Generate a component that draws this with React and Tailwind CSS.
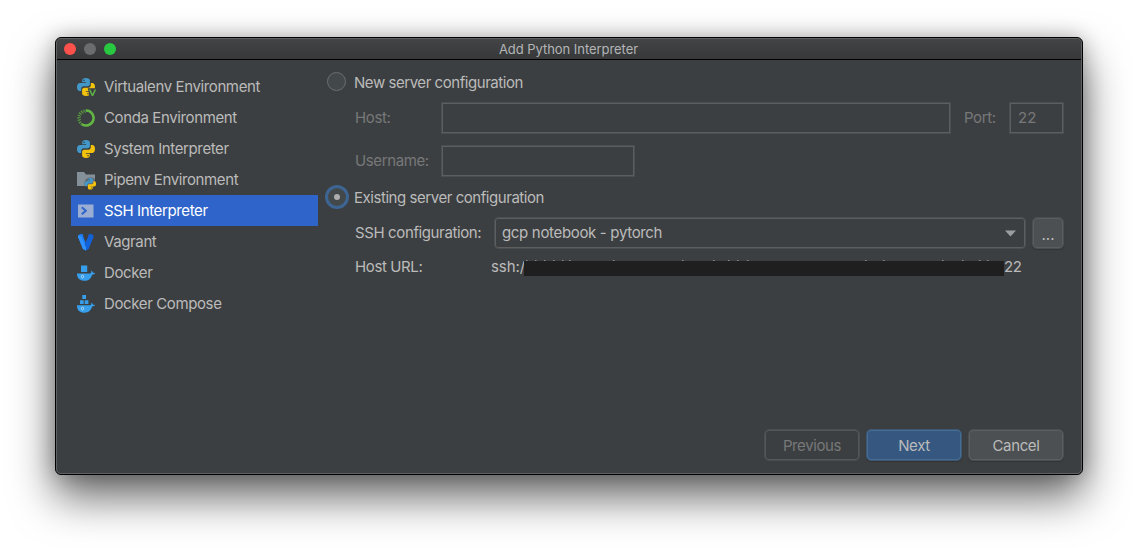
import React from "react";

function PythonShapes() {
  return (
    <>
      <path fill="#4298C8" d="M8.9 0C6 0 5.2 1.1 5.2 2.4v1.9h4v.6H3C1.2 4.900 0 6.300 0 9c0 2.600 1.100 4 2.700 4h1.500v-2.200c0-1.500 1.200-2.600 2.600-2.600h4c1.200 0 2.100-1 2.100-2.200V2.400C12.900.9 11.500 0 8.900 0z" />
      <circle cx="7" cy="2.300" r="0.800" fill="#2f3a40" />
      <path fill="#F2C20C" d="M9.100 18c2.900 0 3.700-1.100 3.700-2.400v-1.900h-4v-.6H15c1.800 0 3-1.400 3-4.100 0-2.600-1.100-4-2.700-4h-1.500v2.200c0 1.500-1.200 2.600-2.600 2.600h-4c-1.200 0-2.100 1-2.100 2.200v3.600c0 1.500 1.400 2.400 4 2.400z" />
      <circle cx="11" cy="15.700" r="0.800" fill="#4b4528" />
    </>
  );
}

function VirtualenvIcon() {
  return (
    <svg width="20" height="18" viewBox="0 0 20 18">
      <PythonShapes />
      <path d="M10.800 10.300h9.200v7.700h-7.500z" fill="#3c3f41" />
      <path d="M12.600 11.500l2.900 6.300 2.900-6.300" fill="none" stroke="#5FB246" strokeWidth="1.500" />
    </svg>
  );
}

function CondaIcon() {
  return (
    <svg width="20" height="18" viewBox="0 0 20 18" fill="none" stroke="#62B543">
      <path d="M9 1.500A7.500 7.500 0 1 1 5 15.300" strokeWidth="2.600" />
      <path d="M5 15.300A7.500 7.500 0 0 1 9 1.500" strokeWidth="2.600" strokeDasharray="1.300 1" opacity="0.750" />
      <path d="M9 3.300A5.800 5.800 0 0 0 4 12" strokeWidth="0.900" strokeDasharray="1 1.400" />
    </svg>
  );
}

function PythonIcon() {
  return (
    <svg width="20" height="18" viewBox="0 0 20 18">
      <PythonShapes />
    </svg>
  );
}

function PipenvIcon() {
  return (
    <svg width="20" height="18" viewBox="0 0 20 18" overflow="visible">
      <path d="M0 1h7l2 2.500h9V15H0z" fill="#84919A" />
      <circle cx="13.500" cy="12.500" r="6.200" fill="#3c3f41" opacity="0.450" />
      <g transform="translate(7.600 7) scale(0.640)">
        <PythonShapes />
      </g>
    </svg>
  );
}

function SshIcon() {
  return (
    <svg width="20" height="18" viewBox="0 0 20 18">
      <path d="M1 2.500h15.500v13H1z" fill="#9AAED3" />
      <path d="M4.800 5.300l4 3.500-4 3.500" fill="none" stroke="#2F65CA" strokeWidth="2" />
    </svg>
  );
}

function VagrantIcon() {
  return (
    <svg width="20" height="18" viewBox="0 0 20 18">
      <path d="M1 2.200L4.400.8 6.200 1.700v1.900L9 10.500v6.900l-3-1.500L1 4z" fill="#1B7CF5" />
      <path d="M16.500 2.200L13.200.8 11.300 1.700v1.900L7.500 12v4.700l1.500.7 2.700-1.500L16.500 4z" fill="#1261D6" />
      <path d="M1 2.200l3.400 1.300L9 14.500v2.900l-3-1.500L1 4z" fill="#2E91FF" />
    </svg>
  );
}

function WhaleShapes() {
  return (
    <>
      <path d="M0 8.800h13.400c.8-.4.900-1.400.7-2.600.9.300 1.700 1.100 1.900 2 .8-.1 1.500 0 2 .4-.5 1-1.500 1.400-2.800 1.500-1.100 3.700-3.500 6.100-7.800 6.100C2.700 16.200-.2 13.500 0 8.800z" fill="#369EEA" />
      <ellipse cx="5.500" cy="12" rx="1.100" ry="1.500" fill="none" stroke="#B9DDF5" strokeWidth="0.900" />
    </>
  );
}

function DockerIcon() {
  return (
    <svg width="20" height="18" viewBox="0 0 20 18">
      <g transform="translate(0 0.600)">
        <WhaleShapes />
        <path d="M4 1h6.200v6.300H4z" fill="#369EEA" />
      </g>
    </svg>
  );
}

function ComposeIcon() {
  return (
    <svg width="20" height="18" viewBox="0 0 20 18">
      <g transform="translate(0 1.500)">
        <WhaleShapes />
      </g>
      <path d="M5.300 0H9v4H5.300zM3 5.200h3.700v3.900H3zM7.700 5.200h3.700v3.900H7.700z" fill="#369EEA" />
    </svg>
  );
}

const environments = [
  { name: "Virtualenv Environment", icon: VirtualenvIcon },
  { name: "Conda Environment", icon: CondaIcon },
  { name: "System Interpreter", icon: PythonIcon },
  { name: "Pipenv Environment", icon: PipenvIcon },
  { name: "SSH Interpreter", icon: SshIcon, selected: true },
  { name: "Vagrant", icon: VagrantIcon },
  { name: "Docker", icon: DockerIcon },
  { name: "Docker Compose", icon: ComposeIcon },
];

function TitleBar() {
  return (
    <header className="grid h-[21px] grid-cols-[1fr_auto_1fr] items-center border-b border-black bg-linear-to-b from-[#424446] to-[#363839]">
      <div className="flex gap-2 pl-[7px]">
        <span className="size-3 rounded-full bg-[#ff514b]" />
        <span className="size-3 rounded-full bg-[#6b6c6e]" />
        <span className="size-3 rounded-full bg-[#28c840]" />
      </div>
      <h1 className="pr-px pt-px text-[13px] leading-none tracking-[-0.05px] text-[#b4b5b6]">Add Python Interpreter</h1>
    </header>
  );
}

function Sidebar() {
  return (
    <ul className="w-[247px] shrink-0 pt-[11px]">
      {environments.map(({ name, icon: Icon, selected }) => (
        <li
          key={name}
          className={
            selected
              ? "flex h-[31px] items-center gap-[7px] bg-[#2f65ca] pl-1.5 text-white"
              : "flex h-[31px] items-center gap-[7px] pl-1.5"
          }
        >
          <Icon />
          <span>{name}</span>
        </li>
      ))}
    </ul>
  );
}

function Radio({ checked, children }) {
  return (
    <label className="flex h-6 items-center gap-[5px] tracking-[-0.45px]">
      {checked ? (
        <span className="flex size-6 items-center justify-center rounded-full border-[3.500px] border-[#3d6593] bg-[#43494a]">
          <span className="size-1.5 rounded-full bg-[#adadad]" />
        </span>
      ) : (
        <span className="mb-px ml-[2px] mr-[3px] size-[19px] rounded-full border border-[#6b6e6f] bg-[#43494a]" />
      )}
      <span className="mt-0.5">{children}</span>
    </label>
  );
}

function UrlFragments() {
  const marks = [2, 11, 20, 29, 38, 45, 89, 158, 189, 204, 213, 223, 341, 359, 418, 438, 455, 463];
  return (
    <svg width="480" height="1" viewBox="0 0 480 1" className="block">
      {marks.map((x) => (
        <rect key={x} x={x} width="1.500" height="1" fill="#85888a" />
      ))}
    </svg>
  );
}

export default function App() {
  return (
    <div className="flex h-[548px] w-[1138px] overflow-hidden bg-white pl-[55px] pt-[37px] font-['Inter','Liberation_Sans',sans-serif] text-[15px] leading-[20px] tracking-[-0.38px] text-[#bbbbbb]">
      <section className="h-[438px] w-[1028px] rounded-[6px] border border-black bg-[#3c3f41] shadow-[0_22px_44px_rgba(0,0,0,0.6),0_0_20px_rgba(0,0,0,0.25)]">
        <div className="flex h-full flex-col overflow-hidden rounded-[5px] border border-[#5f6163]">
          <TitleBar />
          <div className="flex flex-1 pl-[14px]">
            <Sidebar />
            <main className="ml-[7px] flex w-[739px] flex-col pt-[10px]">
              <Radio>New server configuration</Radio>
              <div className="mt-[8px] flex h-8 items-center pl-[30px] text-[#777879]">
                <span className="w-[86px]">Host:</span>
                <div className="h-8 w-[510px] border border-[#4b4e50] shadow-[inset_0_0_0_1px_#5c5e5f]" />
                <span className="ml-[13px] w-[45px]">Port:</span>
                <div className="flex h-8 w-[55px] items-center border border-[#4b4e50] pl-2 tracking-normal shadow-[inset_0_0_0_1px_#5c5e5f]">22</div>
              </div>
              <div className="mt-[11px] flex h-8 items-center pl-[30px] text-[#777879]">
                <span className="w-[86px]">Username:</span>
                <div className="h-8 w-[194px] border border-[#4b4e50] shadow-[inset_0_0_0_1px_#5c5e5f]" />
              </div>
              <div className="mt-2">
                <Radio checked>Existing server configuration</Radio>
              </div>
              <div className="mt-2 flex h-8 items-center pl-[30px]">
                <span className="w-[139px]">SSH configuration:</span>
                <div className="flex h-8 w-[532px] items-center justify-between rounded-[4px] border border-[#4b4e50] pl-[7px] pr-[9px] tracking-[-0.33px] shadow-[inset_0_0_0_1px_#5c5e5f]">
                  <span>gcp notebook - pytorch</span>
                  <svg width="11" height="7" viewBox="0 0 11 7">
                    <path d="M0 0.500h11L5.500 6.500z" fill="#9b9da0" />
                  </svg>
                </div>
                <button className="ml-1.5 flex h-8 w-8 items-center justify-center rounded-[5px] border border-[#4b4e50] bg-[#4c5052] pt-1 tracking-normal shadow-[inset_0_0_0_1px_#5a5d5f,0_1px_1px_#323435]">
                  ...
                </button>
              </div>
              <div className="mt-[8px] flex h-5 items-center pl-[30px]">
                <span className="w-[136px]">Host URL:</span>
                <span className="w-[33px] tracking-[-0.1px]">ssh:/</span>
                <div className="mt-[2px] w-[480px]">
                  <UrlFragments />
                  <div className="h-[15px] bg-[#1f1f1f]" />
                </div>
                <span>22</span>
              </div>
              <div className="mt-auto mb-[12px] flex justify-end gap-1.5">
                <button className="h-8 w-24 rounded-[5px] border border-[#4b4e50] pt-[2px] text-[#777879] shadow-[inset_0_0_0_1px_#55585a]">Previous</button>
                <button className="h-8 w-24 rounded-[5px] border border-[#3f5871] bg-[#365880] pt-[2px] shadow-[inset_0_0_0_1px_#456d93,0_1px_1px_#323435]">Next</button>
                <button className="h-8 w-24 rounded-[5px] border border-[#4b4e50] bg-[#4c5052] pt-[2px] shadow-[inset_0_0_0_1px_#5c5f61,0_1px_1px_#323435]">Cancel</button>
              </div>
            </main>
          </div>
        </div>
      </section>
    </div>
  );
}
